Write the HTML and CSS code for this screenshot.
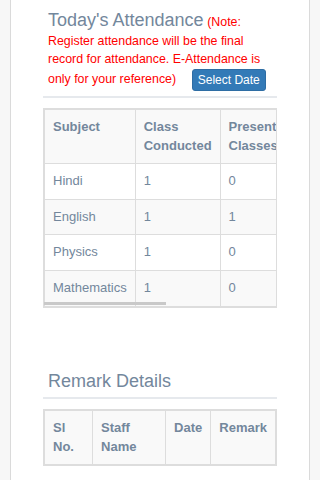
FILE: index.html
```html
<!DOCTYPE html>
<html lang="en">
<head>
<meta charset="utf-8">
<title>Attendance</title>
<link rel="stylesheet" href="styles.css">
</head>
<body>
<div class="panel">
  <div class="col">
    <div class="x-title">
      <span class="title">Today's Attendance</span> <span class="note">(Note: Register attendance will be the final record for attendance. E-Attendance is only for your reference)</span> <button class="btn-date" type="button">Select Date</button>
    </div>
    <div class="table-wrap">
      <div class="table-scroll">
        <table class="grid att">
          <thead>
            <tr class="shade"><th>Subject</th><th>Class Conducted</th><th>Present Classes</th><th>Absent Classes</th><th>Attendance Percentage</th></tr>
          </thead>
          <tbody>
            <tr><td>Hindi</td><td>1</td><td>0</td><td>1</td><td>0%</td></tr>
            <tr class="shade"><td>English</td><td>1</td><td>1</td><td>0</td><td>100%</td></tr>
            <tr><td>Physics</td><td>1</td><td>0</td><td>1</td><td>0%</td></tr>
            <tr class="shade"><td>Mathematics</td><td>1</td><td>0</td><td>1</td><td>0%</td></tr>
          </tbody>
        </table>
      </div>
      <div class="scroll-thumb"></div>
    </div>

    <div class="x-title remark-title">
      <h2 class="title">Remark Details</h2>
    </div>
    <div class="table-wrap">
      <table class="grid remarks">
        <thead>
          <tr class="shade"><th>Sl No.</th><th>Staff Name</th><th>Date</th><th>Remark</th></tr>
        </thead>
        <tbody></tbody>
      </table>
    </div>
  </div>
</div>
</body>
</html>
```

FILE: styles.css
```css
html, body {
  margin: 0;
  padding: 0;
}

body {
  background: #f7f7f7;
  font-family: "Liberation Sans", Arial, sans-serif;
  font-size: 13px;
  line-height: 1.42857;
  color: #73879c;
}

.panel {
  margin: 0 10px;
  min-height: 480px;
  background: #fff;
  border-left: 1px solid #dadada;
  border-right: 1px solid #dadada;
  padding: 10px 17px 20px;
}

.col {
  padding: 0 15px;
}

.x-title {
  padding: 1px 5px 5px;
  border-bottom: 2px solid #e6e9ed;
  margin-bottom: 10px;
}

.title {
  font-size: 18px;
  font-weight: 400;
  line-height: 18.57px;
  color: #73879c;
  margin: 0;
}

.note {
  color: #ff0000;
  font-size: 12.4px;
}

.btn-date {
  display: inline-block;
  vertical-align: middle;
  margin-left: 12px;
  padding: 1px 5px;
  font-family: "Liberation Sans", Arial, sans-serif;
  font-size: 12px;
  line-height: 1.5;
  color: #fff;
  background: #337ab7;
  border: 1px solid #2e6da4;
  border-radius: 3px;
}

.table-wrap {
  position: relative;
  border: 1px solid #dddddd;
  margin-bottom: 15px;
}

.table-scroll {
  overflow-x: auto;
  scrollbar-width: none;
}

.table-scroll::-webkit-scrollbar {
  display: none;
}

.scroll-thumb {
  position: absolute;
  left: 0;
  bottom: 2px;
  width: 122px;
  height: 3px;
  background: #c9c9c9;
}

.grid {
  border-collapse: collapse;
  border-spacing: 0;
  border: 1px solid #dddddd;
  width: 100%;
}

.grid th,
.grid td {
  padding: 8px;
  border: 1px solid #dddddd;
  text-align: left;
  vertical-align: top;
  line-height: 1.42857;
}

.grid th {
  font-weight: 700;
}

.shade {
  background: #f9f9f9;
}

.remark-title {
  margin-top: 64px;
  padding-top: 0;
  padding-bottom: 6px;
}

.remark-title .title {
  line-height: 1.1;
}
```
